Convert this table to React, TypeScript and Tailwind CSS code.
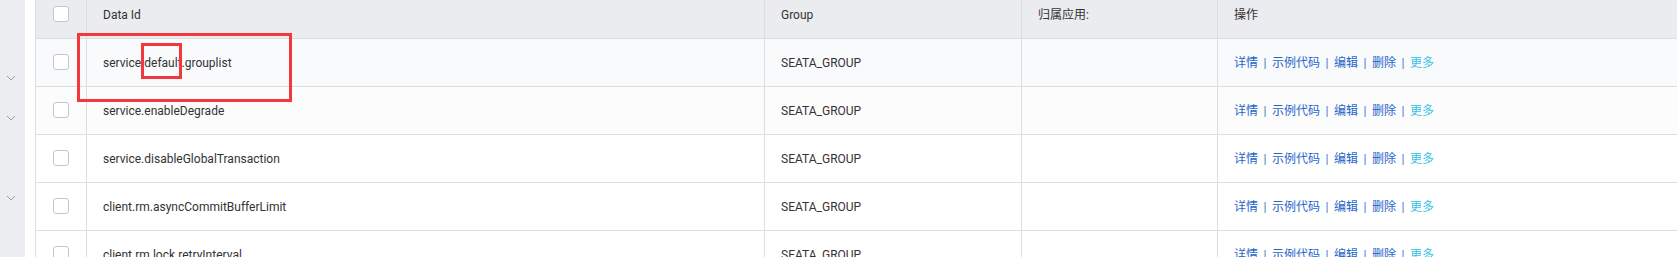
import React from "react";

const rows = [
  { id: "service.default.grouplist", bg: "bg-[#f9fafc]" },
  { id: "service.enableDegrade", bg: "bg-[#fcfcfd]" },
  { id: "service.disableGlobalTransaction", bg: "bg-white" },
  { id: "client.rm.asyncCommitBufferLimit", bg: "bg-white" },
  { id: "client.rm.lock.retryInterval", bg: "bg-white" },
];

const font = { fontFamily: 'Roboto, "Noto Sans CJK SC", sans-serif' };

function Chevron() {
  return (
    <svg width="10" height="6" viewBox="0 0 10 6" fill="none">
      <path d="M1 1 L5 5 L9 1" stroke="#9a9ca3" strokeWidth="1" />
    </svg>
  );
}

function Checkbox() {
  return <div className="w-4 h-4 mb-[2px] rounded-[3px] border border-[#c4c6cf] bg-white" />;
}

function Sep() {
  return <span className="inline-block w-[14px] text-center text-[#3a73c9]">|</span>;
}

function Actions() {
  return (
    <div className="flex items-center text-[12px] text-[#1f65c8]">
      <span>详情</span>
      <Sep />
      <span>示例代码</span>
      <Sep />
      <span>编辑</span>
      <Sep />
      <span>删除</span>
      <Sep />
      <span className="text-[#39c3e4]">更多</span>
    </div>
  );
}

function Row({ id, bg }: { id: string; bg: string }) {
  return (
    <div className={`flex h-[48px] border-b border-[#dcdee3] ${bg}`}>
      <div className="w-[51px] shrink-0 border-r border-[#dcdee3] flex items-center justify-center">
        <Checkbox />
      </div>
      <div className="w-[678px] shrink-0 border-r border-[#dcdee3] flex items-center pl-4 text-[12px] text-[#333]">
        {id}
      </div>
      <div className="w-[257px] shrink-0 border-r border-[#dcdee3] flex items-center pl-4 text-[12px] text-[#333]">
        SEATA_GROUP
      </div>
      <div className="w-[196px] shrink-0 border-r border-[#dcdee3]" />
      <div className="flex-1 flex items-center pl-4">
        <Actions />
      </div>
    </div>
  );
}

export default function App() {
  return (
    <div className="relative flex w-[1677px] h-[257px] overflow-hidden bg-white" style={font}>
      <div className="w-[25px] shrink-0 bg-[#ebedf1] flex flex-col pt-[58px]">
        <div className="h-[40px] flex items-center justify-center pr-[3px]"><Chevron /></div>
        <div className="h-[40px] flex items-center justify-center pr-[3px]"><Chevron /></div>
        <div className="h-[40px]" />
        <div className="h-[40px] flex items-center justify-center pr-[3px]"><Chevron /></div>
      </div>
      <div className="ml-[10px] flex-1 border-l border-[#dcdee3] -mt-[9px]">
        <div className="flex h-[48px] border-b border-[#dcdee3] bg-[#ebecf0] text-[12px] text-[#333]">
          <div className="w-[51px] shrink-0 border-r border-[#dcdee3] flex items-center justify-center">
            <Checkbox />
          </div>
          <div className="w-[678px] shrink-0 border-r border-[#dcdee3] flex items-center pl-4">Data Id</div>
          <div className="w-[257px] shrink-0 border-r border-[#dcdee3] flex items-center pl-4">Group</div>
          <div className="w-[196px] shrink-0 border-r border-[#dcdee3] flex items-center pl-4">归属应用:</div>
          <div className="flex-1 flex items-center pl-4">操作</div>
        </div>
        {rows.map((r) => (
          <Row key={r.id} id={r.id} bg={r.bg} />
        ))}
      </div>
      <div className="absolute left-[77px] top-[33px] w-[215px] h-[69px] border-[3px] border-[#f4373c]" />
      <div className="absolute left-[141px] top-[43px] w-[41px] h-[36px] border-[3px] border-[#f4373c]" />
    </div>
  );
}
